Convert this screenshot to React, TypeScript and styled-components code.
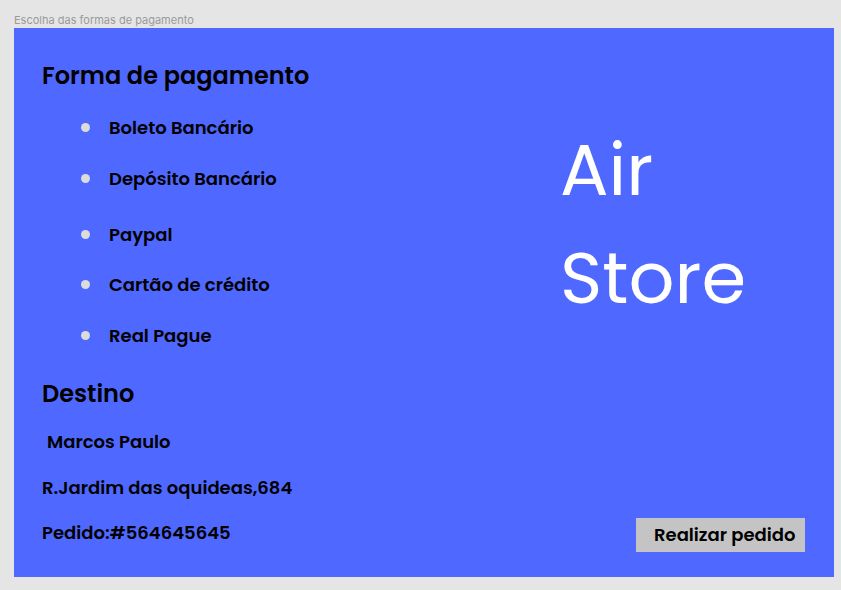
import React from "react";
import styled, { createGlobalStyle } from "styled-components";

const Global = createGlobalStyle`
  html, body { margin: 0; padding: 0; background: #e5e5e5; }
  body { font-family: Poppins, Inter, "Noto Sans", sans-serif; }
`;

const Page = styled.div`
  width: 841px;
  height: 590px;
  box-sizing: border-box;
  padding: 12px 7px 0 14px;
  display: flex;
  flex-direction: column;
`;

const Caption = styled.div`
  font-family: Inter, "Noto Sans", sans-serif;
  font-size: 11px;
  line-height: 16px;
  color: #9a9a9a;
  height: 16px;
`;

const Panel = styled.main`
  width: 820px;
  height: 549px;
  background: #4f68ff;
  display: flex;
  box-sizing: border-box;
  padding: 0 0 0 28px;
`;

const LeftCol = styled.section`
  width: 518px;
  display: flex;
  flex-direction: column;
`;

const RightCol = styled.section`
  flex: 1;
  display: flex;
  flex-direction: column;
  justify-content: space-between;
  padding: 88px 29px 25px 0;
`;

const Heading = styled.h2<{ $top: number }>`
  margin: ${(p) => p.$top}px 0 0;
  font-size: 24px;
  font-weight: 600;
  line-height: 30px;
  color: #000;
`;

const List = styled.ul`
  list-style: none;
  margin: 23px 0 0;
  padding: 0 0 0 39px;
  display: flex;
  flex-direction: column;
`;

const Item = styled.li<{ $gap: number }>`
  display: flex;
  align-items: center;
  gap: 19px;
  height: 26px;
  margin-top: ${(p) => p.$gap}px;
  font-size: 18px;
  font-weight: 600;
  color: #000;
`;

const Dot = styled.span`
  width: 9px;
  height: 9px;
  border-radius: 50%;
  background: #dcdcdc;
  flex-shrink: 0;
`;

const Line = styled.p<{ $top: number; $indent?: number }>`
  margin: ${(p) => p.$top}px 0 0 ${(p) => p.$indent ?? 0}px;
  font-size: 18px;
  font-weight: 600;
  line-height: 26px;
  color: #000;
`;

const Brand = styled.h1`
  margin: 0;
  font-size: 72px;
  font-weight: 400;
  line-height: 108px;
  color: #fff;
`;

const Button = styled.button`
  align-self: flex-end;
  width: 169px;
  height: 34px;
  border: none;
  background: #c4c4c4;
  font-family: inherit;
  font-size: 18px;
  font-weight: 600;
  line-height: 34px;
  text-align: left;
  color: #000;
  padding: 0 0 0 18px;
  cursor: pointer;
`;

const methods: [string, number][] = [
  ["Boleto Bancário", 0],
  ["Depósito Bancário", 25],
  ["Paypal", 30],
  ["Cartão de crédito", 24],
  ["Real Pague", 25],
];

export default function App() {
  return (
    <>
      <Global />
      <Page>
        <Caption>Escolha das formas de pagamento</Caption>
        <Panel>
          <LeftCol>
            <Heading $top={33}>Forma de pagamento</Heading>
            <List>
              {methods.map(([m, g]) => (
                <Item key={m} $gap={g}>
                  <Dot />
                  {m}
                </Item>
              ))}
            </List>
            <Heading $top={31}>Destino</Heading>
            <Line $top={20} $indent={5}>Marcos Paulo</Line>
            <Line $top={20}>R.Jardim das oquideas,684</Line>
            <Line $top={19}>Pedido:#564645645</Line>
          </LeftCol>
          <RightCol>
            <Brand>
              Air
              <br />
              Store
            </Brand>
            <Button>Realizar pedido</Button>
          </RightCol>
        </Panel>
      </Page>
    </>
  );
}
